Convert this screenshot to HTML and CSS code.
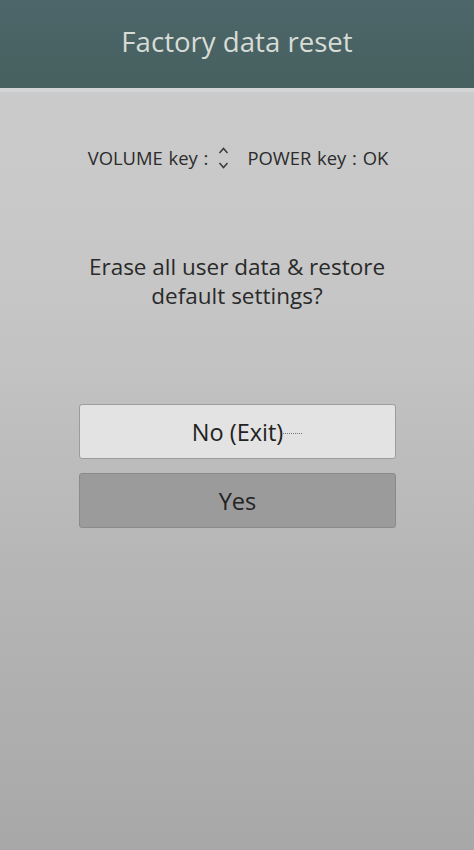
FILE: index.html
```html
<!DOCTYPE html>
<html>
<head>
<meta charset="utf-8">
<link rel="stylesheet" href="styles.css">
</head>
<body>
<div class="screen">
  <header class="top">Factory data reset</header>
  <div class="strip"></div>
  <div class="keys">
    <span>VOLUME key :</span>
    <span class="arrows"><svg width="11" height="24" viewBox="0 0 11 24"><path d="M1.5 7 L5.5 2.5 L9.5 7" fill="none" stroke="#3a3a3a" stroke-width="1.5"/><path d="M1.5 17 L5.5 21.5 L9.5 17" fill="none" stroke="#3a3a3a" stroke-width="1.5"/></svg></span>
    <span class="power">POWER key : OK</span>
  </div>
  <p class="question">Erase all user data &amp; restore<br>default settings?</p>
  <div class="buttons">
    <div class="btn btn-no"><span class="label">No (Exit)<span class="dots"></span></span></div>
    <div class="btn btn-yes"><span class="label">Yes</span></div>
  </div>
</div>
</body>
</html>
```
FILE: styles.css
```css
html, body {
  margin: 0;
  padding: 0;
}
body {
  width: 474px;
  height: 850px;
  overflow: hidden;
  font-family: "Open Sans", "Liberation Sans", sans-serif;
  background: linear-gradient(to bottom, #cdcdcd 0px, #c6c6c6 300px, #b4b4b4 600px, #a8a8a8 850px);
}
.screen {
  display: flex;
  flex-direction: column;
  height: 850px;
}
.top {
  height: 88px;
  background: linear-gradient(to bottom, #4d666a, #46605f);
  color: #d8dcd6;
  font-size: 27.6px;
  display: flex;
  align-items: center;
  justify-content: center;
  padding-bottom: 6px;
  box-sizing: border-box;
}
.strip {
  height: 4px;
  background: #d2d4d6;
}
.keys {
  margin-top: 53px;
  display: flex;
  align-items: center;
  justify-content: center;
  font-size: 18.4px;
  word-spacing: 1px;
  color: #2c2c2c;
  padding-left: 2px;
}
.arrows {
  display: flex;
  margin: 0 0 0 10px;
}
.power {
  margin-left: 18px;
}
.question {
  margin: 82px 0 0 0;
  text-align: center;
  font-size: 22.5px;
  line-height: 29px;
  color: #2a2a2a;
}
.buttons {
  margin-top: 94px;
  display: flex;
  flex-direction: column;
  gap: 14px;
  padding: 0 78px 0 79px;
}
.btn {
  height: 55px;
  border-radius: 3px;
  display: flex;
  align-items: center;
  justify-content: center;
  font-size: 23.5px;
  color: #222;
  box-sizing: border-box;
}
.btn-no {
  background: #e3e3e3;
  border: 1px solid #9c9c9c;
}
.btn-yes {
  background: #9b9b9b;
  border: 1px solid #8a8a8a;
}
.label {
  position: relative;
}
.dots {
  position: absolute;
  left: 100%;
  top: 17px;
  width: 19px;
  border-top: 1px dotted #777;
}
```
